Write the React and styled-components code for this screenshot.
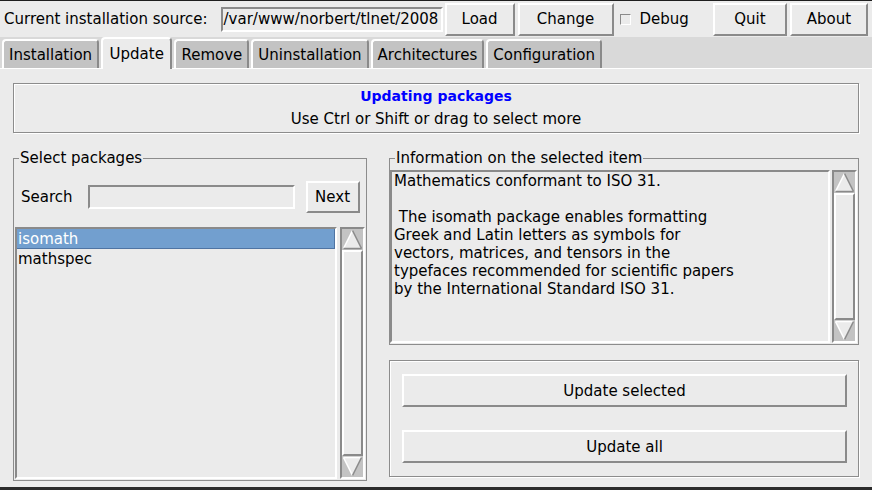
import React from 'react';
import styled, { createGlobalStyle, css } from 'styled-components';

const Global = createGlobalStyle`
  html, body { margin: 0; padding: 0; background: #ebebeb; }
  body { font-family: "DejaVu Sans", "Noto Sans", sans-serif; font-size: 15px; color: #000; }
  * { box-sizing: border-box; }
`;

const raised = css`
  border-style: solid;
  border-width: 2px;
  border-color: #fff #8a8a8a #8a8a8a #fff;
`;
const sunken = css`
  border-style: solid;
  border-width: 2px;
  border-color: #8a8a8a #fff #fff #8a8a8a;
`;

const Window = styled.div`
  width: 872px;
  height: 490px;
  background: #ebebeb;
  border-top: 1px solid #1e1e1e;
  border-bottom: 3px solid #2b2b2b;
  display: flex;
  flex-direction: column;
  overflow: hidden;
`;

const TopBar = styled.div`
  height: 36px;
  display: flex;
  align-items: center;
  padding-left: 4px;
  flex-shrink: 0;
`;

const Label = styled.span`
  white-space: nowrap;
  margin-right: ${p => p.$mr || 0}px;
  margin-left: ${p => p.$ml || 0}px;
`;

const SourceEntry = styled.div`
  ${sunken};
  width: 222px;
  height: 25px;
  padding: 0 1px;
  line-height: 21px;
  white-space: nowrap;
  overflow: hidden;
  background: #ebebeb;
  margin-top: 1px;
`;

const Button = styled.button`
  ${raised};
  width: ${p => (p.$w ? `${p.$w}px` : '100%')};
  height: ${p => p.$h || 33}px;
  margin-left: ${p => p.$ml || 0}px;
  padding: 0;
  background: #ebebeb;
  font: inherit;
  color: #000;
  flex-shrink: 0;
  cursor: default;
`;

const CheckBox = styled.span`
  display: inline-block;
  width: 11px;
  height: 11px;
  margin-left: 6px;
  border-style: solid;
  border-width: 1px;
  border-color: #8a8a8a #fff #fff #8a8a8a;
  background: #ebebeb;
  flex-shrink: 0;
`;

const TabBar = styled.div`
  height: 31px;
  background: #d9d9d9;
  display: flex;
  align-items: flex-end;
  padding-left: 2px;
  gap: 2px;
  flex-shrink: 0;
`;

const Tab = styled.div`
  position: relative;
  z-index: ${p => (p.$active ? 1 : 0)};
  height: ${p => (p.$active ? 32 : 29)}px;
  margin-bottom: ${p => (p.$active ? -1 : 0)}px;
  padding: 0 ${p => (p.$active ? 6.5 : 5)}px ${p => (p.$active ? 1 : 0)}px;
  border-style: solid;
  border-width: 2px 2px 0 2px;
  border-color: #fff #8a8a8a transparent #fff;
  border-radius: 4px 4px 0 0;
  background: ${p => (p.$active ? '#ebebeb' : '#c3c3c3')};
  display: flex;
  align-items: center;
  white-space: nowrap;
`;

const Page = styled.div`
  flex: 1;
  border-top: 1px solid #fff;
  padding: 14px 13px 0 13px;
  display: flex;
  flex-direction: column;
`;

const InfoBox = styled.div`
  height: 50px;
  border: 1px solid #8c8c8c;
  box-shadow: inset 1px 1px 0 #fff, 1px 1px 0 #fff;
  text-align: center;
  line-height: 23px;
  padding-top: 1px;
`;

const Title = styled.div`
  color: #0000ff;
  font-weight: bold;
  font-size: 14px;
`;

const Columns = styled.div`
  margin-top: 16px;
  display: flex;
  gap: 22px;
`;

const Frame = styled.fieldset`
  margin: 0;
  padding: 0;
  border: 1px solid #8c8c8c;
  width: ${p => p.$w}px;
  min-width: 0;
`;

const Legend = styled.legend`
  padding: 0 1px;
  margin-left: 5px;
  line-height: 18px;
`;

const FrameBody = styled.div`
  height: ${p => p.$h}px;
  display: flex;
  flex-direction: column;
`;

const SearchRow = styled.div`
  margin-top: 14px;
  height: 32px;
  display: flex;
  align-items: center;
  padding-left: 7px;
  flex-shrink: 0;
`;

const SearchEntry = styled.div`
  ${sunken};
  width: 207px;
  height: 24px;
  margin-left: 15px;
  background: #ebebeb;
`;

const ListRow = styled.div`
  margin-top: ${p => p.$mt}px;
  flex: 1;
  display: flex;
  gap: ${p => p.$gap}px;
  padding: 0 1px 1px ${p => p.$pl}px;
  min-height: 0;
`;

const ListBox = styled.div`
  ${sunken};
  width: 322px;
  background: #ebebeb;
`;

const ListItem = styled.div`
  height: 20px;
  line-height: 20px;
  padding-left: 1px;
  background: ${p => (p.$selected ? '#729fcf' : 'transparent')};
  color: ${p => (p.$selected ? '#fff' : '#000')};
  border-bottom: 1px solid ${p => (p.$selected ? '#4f74a3' : 'transparent')};
  border-right: 1px solid ${p => (p.$selected ? '#4f74a3' : 'transparent')};
`;

const TextBox = styled.div`
  ${sunken};
  width: 440px;
  padding: 0 2px;
  line-height: 18px;
  white-space: pre;
  background: #ebebeb;
  overflow: hidden;
`;

const Scroll = styled.div`
  ${sunken};
  width: 25px;
  display: flex;
  flex-direction: column;
  background: #ebebeb;
  flex-shrink: 0;
`;

const Slider = styled.div`
  ${raised};
  flex: 1;
  background: #ebebeb;
`;

const ArrowSvg = styled.svg`
  display: block;
  width: 21px;
  height: 21px;
  flex-shrink: 0;
`;

const RightCol = styled.div`
  display: flex;
  flex-direction: column;
`;

const ButtonFrame = styled.div`
  margin-top: 15px;
  height: 117px;
  border: 1px solid #8c8c8c;
  box-shadow: inset 1px 1px 0 #fff, 1px 1px 0 #fff;
  padding: 13px 11px 0 12px;
  display: flex;
  flex-direction: column;
  gap: 23px;
`;

const UpArrow = () => (
  <ArrowSvg viewBox="0 0 21 21">
    <rect width="21" height="21" fill="#c3c3c3" />
    <polygon points="10.5,1.5 1.5,19.5 19.5,19.5" fill="#ebebeb" />
    <line x1="1.5" y1="19.5" x2="10.5" y2="1.5" stroke="#fff" strokeWidth="1.5" />
    <line x1="10.5" y1="1.5" x2="19.5" y2="19.5" stroke="#8a8a8a" strokeWidth="1.5" />
    <line x1="1.5" y1="19.5" x2="19.5" y2="19.5" stroke="#8a8a8a" strokeWidth="1.5" />
  </ArrowSvg>
);

const DownArrow = () => (
  <ArrowSvg viewBox="0 0 21 21">
    <rect width="21" height="21" fill="#c3c3c3" />
    <polygon points="1.5,1.5 19.5,1.5 10.5,19.5" fill="#ebebeb" />
    <line x1="1.5" y1="1.5" x2="19.5" y2="1.5" stroke="#fff" strokeWidth="1.5" />
    <line x1="1.5" y1="1.5" x2="10.5" y2="19.5" stroke="#fff" strokeWidth="1.5" />
    <line x1="19.5" y1="1.5" x2="10.5" y2="19.5" stroke="#8a8a8a" strokeWidth="1.5" />
  </ArrowSvg>
);

const ScrollBar = () => (
  <Scroll>
    <UpArrow />
    <Slider />
    <DownArrow />
  </Scroll>
);

const tabs = ['Installation', 'Update', 'Remove', 'Uninstallation', 'Architectures', 'Configuration'];

const info = `Mathematics conformant to ISO 31.

 The isomath package enables formatting
Greek and Latin letters as symbols for
vectors, matrices, and tensors in the
typefaces recommended for scientific papers
by the International Standard ISO 31.`;

export default function App() {
  return (
    <>
      <Global />
      <Window>
        <TopBar>
          <Label $mr={13}>Current installation source:</Label>
          <SourceEntry>/var/www/norbert/tlnet/2008</SourceEntry>
          <Button $w={70} $ml={2}>Load</Button>
          <Button $w={96} $ml={3}>Change</Button>
          <CheckBox />
          <Label $ml={9}>Debug</Label>
          <Button $w={74} $ml={24}>Quit</Button>
          <Button $w={78} $ml={3}>About</Button>
        </TopBar>
        <TabBar>
          {tabs.map(t => (
            <Tab key={t} $active={t === 'Update'}>{t}</Tab>
          ))}
        </TabBar>
        <Page>
          <InfoBox>
            <Title>Updating packages</Title>
            <div>Use Ctrl or Shift or drag to select more</div>
          </InfoBox>
          <Columns>
            <Frame $w={354}>
              <Legend>Select packages</Legend>
              <FrameBody $h={313}>
                <SearchRow>
                  <Label>Search</Label>
                  <SearchEntry />
                  <Button $w={54} $h={32} $ml={11}>Next</Button>
                </SearchRow>
                <ListRow $mt={14} $gap={3} $pl={1}>
                  <ListBox>
                    <ListItem $selected>isomath</ListItem>
                    <ListItem>mathspec</ListItem>
                  </ListBox>
                  <ScrollBar />
                </ListRow>
              </FrameBody>
            </Frame>
            <RightCol>
              <Frame $w={470}>
                <Legend>Information on the selected item</Legend>
                <FrameBody $h={177}>
                  <ListRow $mt={3} $gap={2} $pl={0}>
                    <TextBox>{info}</TextBox>
                    <ScrollBar />
                  </ListRow>
                </FrameBody>
              </Frame>
              <ButtonFrame>
                <Button>Update selected</Button>
                <Button>Update all</Button>
              </ButtonFrame>
            </RightCol>
          </Columns>
        </Page>
      </Window>
    </>
  );
}
